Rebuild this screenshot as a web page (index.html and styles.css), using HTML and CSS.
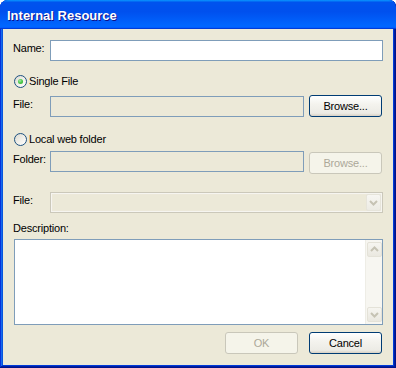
FILE: index.html
```html
<!DOCTYPE html>
<html>
<head>
<meta charset="utf-8">
<title>Internal Resource</title>
<link rel="stylesheet" href="styles.css">
</head>
<body>
<div class="window">
  <div class="titlebar"><span class="title">Internal Resource</span></div>
  <div class="content">
    <div class="row row-name">
      <span class="lbl">Name:</span>
      <div class="field"></div>
    </div>
    <div class="radio-row row-r1">
      <span class="radio checked"></span><span class="rtext">Single File</span>
    </div>
    <div class="row row-file">
      <span class="lbl lbl-file">File:</span>
      <div class="field ro short"></div>
      <div class="btn">Browse...</div>
    </div>
    <div class="radio-row row-r2">
      <span class="radio"></span><span class="rtext">Local web folder</span>
    </div>
    <div class="row row-folder">
      <span class="lbl">Folder:</span>
      <div class="field ro short"></div>
      <div class="btn disabled btn-folder">Browse...</div>
    </div>
    <div class="row row-select">
      <span class="lbl">File:</span>
      <div class="select">
        <span class="dd">
          <svg width="15" height="17" viewBox="0 0 15 17"><path d="M4 7 L7.5 10.5 L11 7" fill="none" stroke="#c6c3b4" stroke-width="2"/></svg>
        </span>
      </div>
    </div>
    <div class="desc-label">Description:</div>
    <div class="textarea">
      <div class="scrollbar">
        <span class="sb-btn">
          <svg width="15" height="15" viewBox="0 0 15 15"><path d="M4 9 L7.5 5.5 L11 9" fill="none" stroke="#c6c3b4" stroke-width="2"/></svg>
        </span>
        <span class="track"></span>
        <span class="sb-btn">
          <svg width="15" height="15" viewBox="0 0 15 15"><path d="M4 6 L7.5 9.5 L11 6" fill="none" stroke="#c6c3b4" stroke-width="2"/></svg>
        </span>
      </div>
    </div>
    <div class="buttons">
      <div class="btn disabled">OK</div>
      <div class="btn">Cancel</div>
    </div>
  </div>
</div>
</body>
</html>
```

FILE: styles.css
```css
html, body {
  margin: 0;
  padding: 0;
  background: #ffffff;
}
body {
  font-family: "Liberation Sans", Arial, sans-serif;
  font-size: 11px;
  letter-spacing: -0.2px;
  color: #000000;
}
.window {
  width: 396px;
  height: 368px;
  box-sizing: border-box;
  background: #0831d9;
  border-radius: 8px 7px 0 0;
  padding: 0 3px 3px;
  box-shadow: inset -1px -1px #00138c, inset 1px 1px #0831d9, inset -2px -2px #001ea0, inset 2px 2px #166aee, inset -3px -3px #003bda, inset 3px 3px #0855dd;
  display: flex;
  flex-direction: column;
}
.titlebar {
  margin: 0 -3px;
  height: 29px;
  box-sizing: border-box;
  padding: 6px 0 0 7px;
  border-radius: 8px 7px 0 0;
  background: linear-gradient(180deg, #0997ff, #0053ee 8%, #0050ee 40%, #0066ff 88%, #0066ff 93%, #005bff 95%, #003dd7 96%, #003dd7);
}
.title {
  display: block;
  font-family: "Liberation Sans", Arial, sans-serif;
  font-weight: bold;
  font-size: 13px;
  letter-spacing: 0;
  line-height: 20px;
  color: #ffffff;
  text-shadow: 1px 1px #0f1089;
}
.content {
  flex: 1;
  background: #ece9d8;
  padding: 11px 10px 0 10px;
  display: flex;
  flex-direction: column;
}
.row {
  display: flex;
  align-items: flex-start;
}
.lbl {
  width: 37px;
  flex: none;
  line-height: 13px;
  margin-top: 2px;
}
.lbl-file { margin-top: 3px; }
.field {
  flex: 1;
  height: 21px;
  box-sizing: border-box;
  border: 1px solid #7f9db9;
  background: #ffffff;
}
.field.ro {
  background: #ece9d8;
}
.field.short {
  flex: none;
  width: 254px;
}
.row-name { height: 21px; }
.row-file { height: 22px; margin-top: 7px; }
.row-file .field { margin-top: 1px; }
.row-folder { height: 22px; margin-top: 5px; }
.btn-folder { margin-top: 1px; }
.row-select { height: 21px; margin-top: 19px; }

.radio-row {
  display: flex;
  align-items: flex-start;
  height: 13px;
  line-height: 13px;
  padding-left: 1px;
}
.row-r1 { margin-top: 14px; }
.row-r2 { margin-top: 16px; }
.radio {
  width: 13px;
  height: 13px;
  box-sizing: border-box;
  border: 1px solid #1c5180;
  border-radius: 50%;
  background: linear-gradient(135deg, #dcd9d0 0%, #f0efe9 50%, #ffffff 100%);
  display: flex;
  align-items: center;
  justify-content: center;
  flex: none;
}
.radio.checked::after {
  content: "";
  width: 5px;
  height: 5px;
  border-radius: 50%;
  background: radial-gradient(circle at 40% 35%, #a6e7a6 0%, #4dcb4d 45%, #21a121 100%);
}
.rtext {
  margin-left: 2px;
}

.btn {
  width: 73px;
  height: 22px;
  box-sizing: border-box;
  margin-left: 5px;
  border: 1px solid #003c74;
  border-radius: 3px;
  background: linear-gradient(180deg, #ffffff, #f4f3ee 40%, #ecebe5 86%, #d8d0c4);
  display: flex;
  align-items: center;
  justify-content: center;
  line-height: 13px;
  flex: none;
}
.btn.disabled {
  border-color: #c9c7ba;
  background: #f5f4ea;
  color: #aca899;
}

.select {
  flex: 1;
  height: 21px;
  box-sizing: border-box;
  border: 1px solid #cbc8ba;
  background: #ece9d8;
  box-shadow: inset 0 0 0 1px #f6f5f0, inset 0 0 0 2px #ede9da;
  display: flex;
  justify-content: flex-end;
  align-items: center;
  padding-right: 1px;
}
.dd {
  width: 15px;
  height: 17px;
  box-sizing: border-box;
  border: 1px solid #e6e4da;
  border-radius: 2px;
  background: linear-gradient(180deg, #f7f6f2, #ecebe4);
  display: flex;
  align-items: center;
  justify-content: center;
}
.dd svg { display: block; margin: -1px; }

.desc-label {
  line-height: 13px;
  height: 13px;
  margin-top: 9px;
}
.textarea {
  height: 86px;
  margin-top: 4px;
  margin-left: 1px;
  box-sizing: border-box;
  border: 1px solid #7f9db9;
  background: #ffffff;
  display: flex;
  justify-content: flex-end;
}
.scrollbar {
  width: 17px;
  box-sizing: border-box;
  padding: 2px 1px 2px 1px;
  background: #f7f6f1;
  border-left: 1px solid #eeede6;
  display: flex;
  flex-direction: column;
  align-items: center;
}
.track { flex: 1; }
.sb-btn {
  width: 15px;
  height: 15px;
  box-sizing: border-box;
  border: 1px solid #e4e2d8;
  border-radius: 2px;
  background: linear-gradient(180deg, #f6f5f0, #eae8e0);
  display: flex;
  align-items: center;
  justify-content: center;
}
.sb-btn svg { display: block; margin: -1px; }

.buttons {
  display: flex;
  justify-content: flex-end;
  gap: 11px;
  margin-top: 7px;
  margin-right: 1px;
}
.buttons .btn { margin-left: 0; }
```
